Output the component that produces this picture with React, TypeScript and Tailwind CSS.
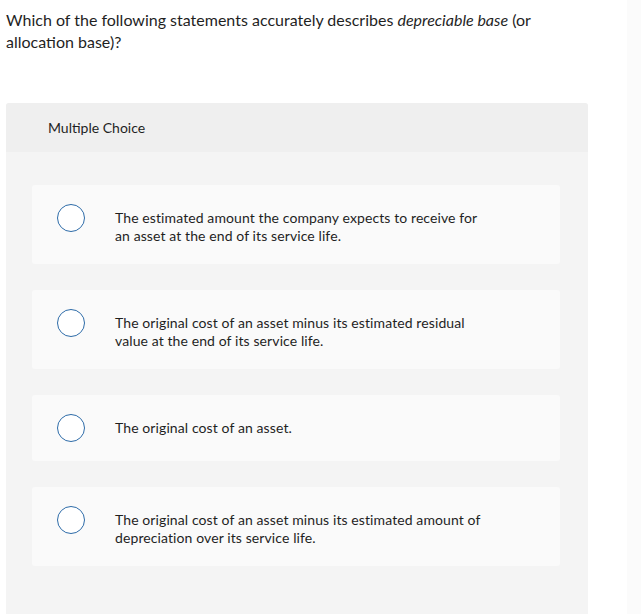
const OPTIONS = [
  "The estimated amount the company expects to receive for an asset at the end of its service life.",
  "The original cost of an asset minus its estimated residual value at the end of its service life.",
  "The original cost of an asset.",
  "The original cost of an asset minus its estimated amount of depreciation over its service life.",
];

export default function App() {
  return (
    <div className="min-h-[614px] bg-white font-['Lato',sans-serif] text-[#1f1f1f] flex">
      <div className="w-[627px] shrink-0">
        <p className="pl-[6px] pt-[9px] text-[16px] leading-[22px] w-[580px]">
          Which of the following statements accurately describes{" "}
          <span className="italic">depreciable base</span> (or allocation base)?
        </p>

        <div className="ml-[6px] mt-[50px] w-[582px] min-h-[520px] bg-[#f4f4f4] rounded-t-[3px]">
          <div className="h-[49px] bg-[#efefef] rounded-t-[3px] flex items-center pl-[42px] text-[14px]">
            Multiple Choice
          </div>
          <div className="pt-[33px] pl-[26px] pr-[28px] flex flex-col gap-[26px]">
            {OPTIONS.map((text) => (
              <OptionCard key={text} text={text} />
            ))}
          </div>
        </div>
      </div>
      <div className="flex-1 bg-[#fbfbfb]" />
    </div>
  );
}

function OptionCard({ text }: { text: string }) {
  return (
    <div className="bg-[#fafafa] rounded-[3px] py-[19px] pl-[25px] flex items-start">
      <span className="w-[28px] h-[28px] rounded-full border-[1.5px] border-[#2d6ba8] bg-white shrink-0" />
      <span className="ml-[30px] pt-[5px] text-[14px] leading-[18px] tracking-[0.1px] w-[372px]">
        {text}
      </span>
    </div>
  );
}
